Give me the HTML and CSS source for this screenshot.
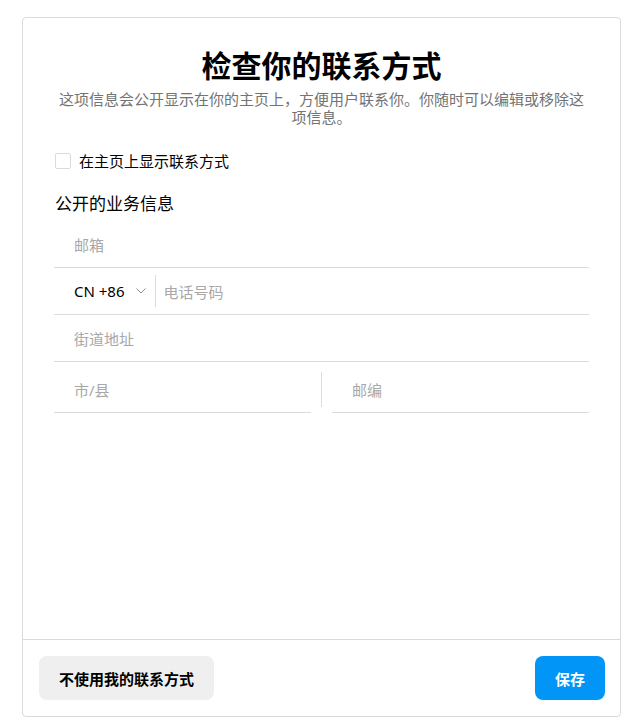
FILE: index.html
```html
<!DOCTYPE html>
<html lang="zh-CN">
<head>
<meta charset="utf-8">
<title>检查你的联系方式</title>
<link rel="stylesheet" href="styles.css">
</head>
<body>
<div class="card">
  <div class="content">
    <h1 class="title">检查你的联系方式</h1>
    <p class="subtitle">这项信息会公开显示在你的主页上，方便用户联系你。你随时可以编辑或移除这项信息。</p>
    <label class="check-row">
      <span class="checkbox"></span>
      <span class="check-label">在主页上显示联系方式</span>
    </label>
    <div class="section-title">公开的业务信息</div>
    <div class="form">
      <div class="field">
        <span class="placeholder">邮箱</span>
      </div>
      <div class="field phone">
        <span class="country">CN +86</span>
        <svg class="chev" width="10" height="6" viewBox="0 0 10 6"><path d="M0.5 0.5 L5 5 L9.5 0.5" fill="none" stroke="#8e8e8e" stroke-width="1"/></svg>
        <span class="vsep"></span>
        <span class="placeholder phone-ph">电话号码</span>
      </div>
      <div class="field">
        <span class="placeholder">街道地址</span>
      </div>
      <div class="split">
        <div class="field half">
          <span class="placeholder">市/县</span>
        </div>
        <span class="vsep tall"></span>
        <div class="field half">
          <span class="placeholder">邮编</span>
        </div>
      </div>
    </div>
  </div>
  <div class="footer">
    <button class="btn btn-secondary">不使用我的联系方式</button>
    <button class="btn btn-primary">保存</button>
  </div>
</div>
</body>
</html>
```

FILE: styles.css
```css
* { box-sizing: border-box; }
html, body { margin: 0; padding: 0; background: #fff; }
body {
  font-family: "Noto Sans", "Noto Sans CJK SC", sans-serif;
  color: #000;
  padding: 17px 0 0 22px;
}
.card {
  width: 599px;
  height: 700px;
  border: 1px solid #dbdbdb;
  border-radius: 4px;
  display: flex;
  flex-direction: column;
}
.content {
  flex: 1;
  padding: 30px 31px 0 31px;
  display: flex;
  flex-direction: column;
}
.title {
  margin: 0;
  font-size: 30px;
  line-height: 36px;
  font-weight: 700;
  text-align: center;
}
.subtitle {
  margin: 6px 0 0;
  padding: 0 1px;
  font-size: 15px;
  line-height: 18px;
  color: #737373;
  text-align: center;
}
.check-row {
  display: flex;
  align-items: center;
  margin-top: 26px;
  padding-left: 1px;
  height: 18px;
}
.checkbox {
  width: 16px;
  height: 16px;
  border: 1px solid #dbdbdb;
  border-radius: 2px;
  background: #fff;
}
.check-label {
  margin-left: 8px;
  font-size: 15px;
  line-height: 18px;
}
.section-title {
  margin-top: 22px;
  padding-left: 1px;
  font-size: 17px;
  line-height: 24px;
}
.form {
  margin-top: 5px;
  display: flex;
  flex-direction: column;
}
.field {
  height: 47px;
  border-bottom: 1px solid #dbdbdb;
  display: flex;
  align-items: center;
  padding-left: 20px;
  font-size: 15px;
}
.placeholder { color: #a8a8a8; }
.country { color: #000; }
.chev { margin-left: 11px; }
.vsep {
  width: 1px;
  height: 32px;
  background: #dbdbdb;
  margin-left: 9px;
}
.phone-ph { margin-left: 8px; }
.split {
  display: flex;
  align-items: center;
  margin-top: 4px;
}
.half { flex: 1; height: 47px; }
.vsep.tall {
  height: 35px;
  margin: 0 10px;
  align-self: center;
}
.footer {
  border-top: 1px solid #dbdbdb;
  padding: 16px 15px 16px 16px;
  display: flex;
  justify-content: space-between;
}
.btn {
  height: 44px;
  border: none;
  border-radius: 8px;
  padding: 0 20px;
  font-family: "Noto Sans", "Noto Sans CJK SC", sans-serif;
  font-size: 15px;
  font-weight: 700;
  cursor: pointer;
}
.btn-secondary { background: #efefef; color: #000; }
.btn-primary { background: #0095f6; color: #fff; }
```
